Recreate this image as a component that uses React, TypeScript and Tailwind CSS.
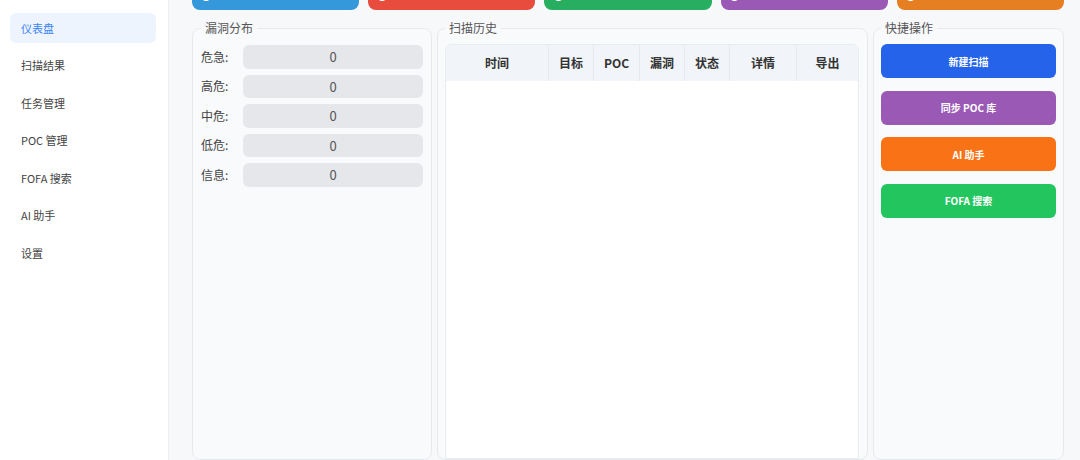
import { useState } from "react";

const navItems = ["仪表盘", "扫描结果", "任务管理", "POC 管理", "FOFA 搜索", "AI 助手", "设置"];

const statCards = [
    { key: "scans", value: 0, color: "bg-[#3498db]" },
    { key: "vulns", value: 0, color: "bg-[#e74c3c]" },
    { key: "pocs", value: 0, color: "bg-[#27ae60]" },
    { key: "tasks", value: 0, color: "bg-[#9b59b6]" },
    { key: "running", value: 0, color: "bg-[#e67e22]" },
];

const levels = ["危急", "高危", "中危", "低危", "信息"];

const columns = [
    { name: "时间", w: "w-[103px]" },
    { name: "目标", w: "w-[45px]" },
    { name: "POC", w: "w-[46px]" },
    { name: "漏洞", w: "w-[45px]" },
    { name: "状态", w: "w-[45px]" },
    { name: "详情", w: "w-[67px]" },
    { name: "导出", w: "flex-1" },
];

const actions = [
    { name: "新建扫描", color: "bg-[#2563eb]" },
    { name: "同步 POC 库", color: "bg-[#9b59b6]" },
    { name: "AI 助手", color: "bg-[#f97316]" },
    { name: "FOFA 搜索", color: "bg-[#22c55e]" },
];

function App() {
    const [active, setActive] = useState(0);

    return (
        <div className="flex h-[460px] w-[1080px] overflow-hidden bg-[#f7f8fa] font-['Noto_Sans_CJK_SC','Noto_Sans',sans-serif] text-[#333]">
            {/* sidebar */}
            <aside className="flex w-[169px] shrink-0 flex-col gap-[7.5px] border-r border-[#eceef1] bg-white pl-[10px] pr-[12px] pt-[13px]">
                {navItems.map((item, i) => (
                    <div
                        key={item}
                        onClick={() => setActive(i)}
                        className={
                            "flex h-[30px] cursor-pointer items-center rounded-md px-[11px] text-[11px] " +
                            (i === active ? "bg-[#eef4fd] text-[#3b82f6]" : "text-[#444]")
                        }
                    >
                        {item}
                    </div>
                ))}
            </aside>

            {/* main */}
            <main className="flex flex-1 flex-col pl-[23px] pr-[16px]">
                {/* stat cards, scrolled mostly out of view */}
                <div className="-mt-[70px] grid grid-cols-5 gap-[9px]">
                    {statCards.map((c) => (
                        <div key={c.key} className={"flex h-[80px] flex-col justify-end rounded-lg px-[8px] pb-[7px] text-white " + c.color}>
                            <div className="text-[20px] font-bold leading-none">{c.value}</div>
                        </div>
                    ))}
                </div>

                <div className="mt-[9px] grid flex-1 grid-cols-[240px_431px_191px] gap-[5px]">
                    {/* severity */}
                    <fieldset className="rounded-lg border border-[#e6e9ee] bg-[#f8fafc] px-[8px] pt-[8px]">
                        <legend className="px-[4px] text-[12px] leading-[18px] text-[#555]">漏洞分布</legend>
                        <div className="flex flex-col gap-[6px]">
                            {levels.map((l) => (
                                <div key={l} className="flex items-center">
                                    <span className="w-[42px] text-[12px] text-[#444]">{l}:</span>
                                    <div className="flex h-[23.5px] flex-1 items-center justify-center rounded-md bg-[#e5e7eb] text-[13px] text-[#555]">
                                        0
                                    </div>
                                </div>
                            ))}
                        </div>
                    </fieldset>

                    {/* history */}
                    <fieldset className="flex flex-col rounded-lg border border-[#e6e9ee] bg-[#f8fafc] pl-[7px] pr-[8px] pt-[7px]">
                        <legend className="px-[4px] text-[12px] leading-[18px] text-[#555]">扫描历史</legend>
                        <div className="flex h-full flex-col rounded-t-md border border-[#e8ebf0] bg-white">
                            <div className="flex h-[36px] bg-[#f1f4f8]">
                                {columns.map((c, i) => (
                                    <div
                                        key={c.name}
                                        className={
                                            "flex items-center justify-center text-[12px] font-bold text-[#333] " +
                                            c.w +
                                            (i < columns.length - 1 ? " border-r border-[#e6e9ee]" : "")
                                        }
                                    >
                                        {c.name}
                                    </div>
                                ))}
                            </div>
                        </div>
                    </fieldset>

                    {/* quick actions */}
                    <fieldset className="rounded-lg border border-[#e6e9ee] bg-[#f8fafc] px-[7px] pt-[7px]">
                        <legend className="px-[4px] text-[12px] leading-[18px] text-[#555]">快捷操作</legend>
                        <div className="flex flex-col gap-[12.5px]">
                            {actions.map((a) => (
                                <button
                                    key={a.name}
                                    className={"flex h-[34px] items-center justify-center rounded-md text-[10px] font-bold text-white " + a.color}
                                >
                                    {a.name}
                                </button>
                            ))}
                        </div>
                    </fieldset>
                </div>
            </main>
        </div>
    );
}

export default App;
